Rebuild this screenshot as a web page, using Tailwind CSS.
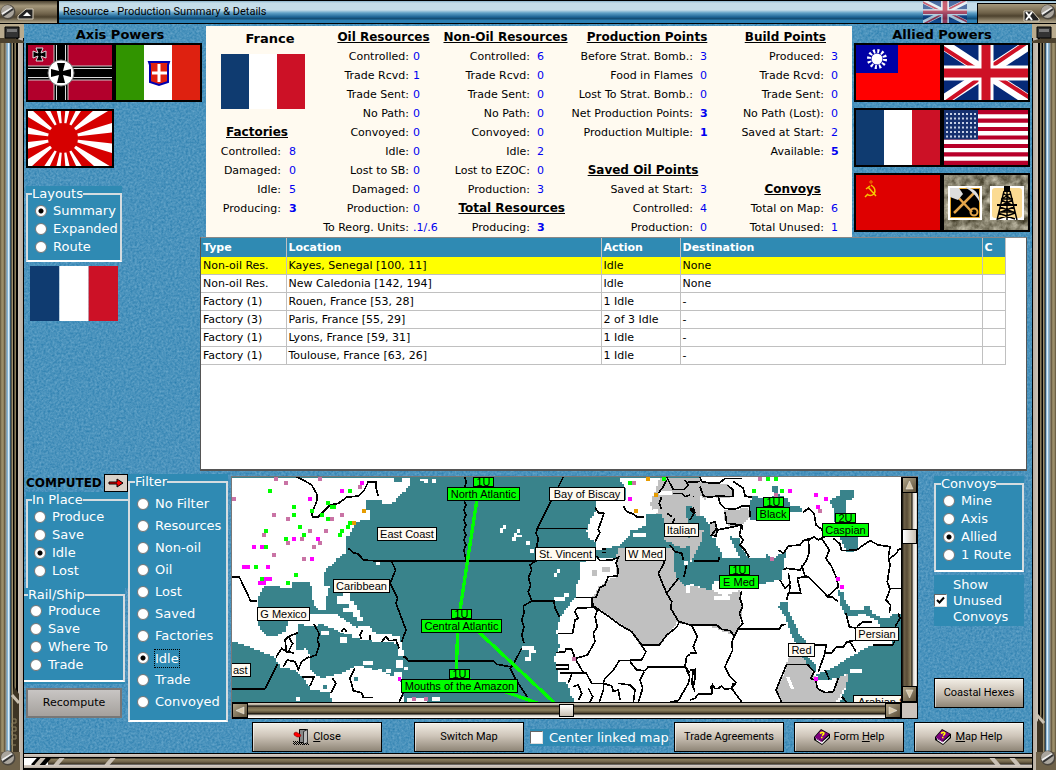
<!DOCTYPE html>
<html lang="en">
<head>
    <meta charset="UTF-8">
    <meta name="viewport" content="width=device-width, initial-scale=1.0">
    <title>Resource - Production Summary &amp; Details</title>
    <script src="https://cdn.jsdelivr.net/npm/@tailwindcss/browser@4"></script>
</head>
<body class="min-h-screen flex flex-col bg-[#4791bd] font-['DejaVu_Sans',Verdana,sans-serif] text-[11px] text-black [&_[type=radio]]:size-3 [&_[type=radio]]:shrink-0 [&_[type=radio]]:appearance-none [&_[type=radio]]:rounded-full [&_[type=radio]]:border [&_[type=radio]]:border-[#777] [&_[type=radio]]:bg-white [&_[type=radio]:checked]:bg-[radial-gradient(circle,#000_2px,#fff_3px)]">

    <!-- Shared flags and icons -->
    <svg class="hidden">
        <symbol id="france" viewBox="0 0 84 55" preserveAspectRatio="none">
            <path fill="#0f3b70" d="M0 0h28v55H0z"/><path fill="#fff" d="M28 0h28v55H28z"/><path fill="#cc1126" d="M56 0h28v55H56z"/>
        </symbol>
        <symbol id="uk" viewBox="0 0 84 55" preserveAspectRatio="none">
            <path fill="#062a78" d="M0 0h84v55H0z"/>
            <path stroke="#fff" stroke-width="11" d="M0 0l84 55M84 0L0 55"/>
            <path stroke="#ce1126" stroke-width="4" d="M-2 2l42 27M82-2L42 25M86 53L44 26M2 57l40-28"/>
            <path stroke="#fff" stroke-width="15" d="M42 0v55M0 28h84"/>
            <path stroke="#ce1126" stroke-width="9" d="M42 0v55M0 28h84"/>
        </symbol>
        <symbol id="book" viewBox="0 0 16 16">
            <path fill="#000" d="M7 0l9 5v4l-8 7-8-5V8z"/>
            <path fill="#800080" d="M7 1l8 4-7 7-7-4z"/>
            <path fill="#fff" d="M2 10l6 3 7-6v1l-7 7-6-4z"/>
            <path stroke="#c040c0" d="M1 8.500l7 4.500" fill="none"/>
            <path stroke="#ff0" stroke-width="1.500" fill="none" d="M6 4.500q2-2 4-.5 0 1.500-2 2.500M7 8.500h1.500"/>
        </symbol>
        <symbol id="screw" viewBox="0 0 16 16">
            <circle cx="8" cy="8" r="7.500" fill="#4b463e"/><circle cx="7.500" cy="7.500" r="6.500" fill="#aaa59d"/>
            <path stroke="#eee" stroke-width="2" d="M2 10l10-6"/><path stroke="#333" stroke-width="2" d="M3 12l10-7"/>
        </symbol>
    </svg>

    <!-- Title bar -->
    <header class="relative z-10 flex h-6 shrink-0 items-stretch border-y border-black bg-[linear-gradient(#8bb4cc,#c5dde9_2px,#c5dde9_9px,#5fa0c6_12px,#1c6394_16px,#12476c_18px,#2a7fb4_19px,#2a7fb4)]">
        <div class="flex w-[59px] items-center border-r-2 border-black bg-[linear-gradient(#4b4231,#a4977b_5px,#6e6149_13px,#4d422e_16px,#b7ab90)]">
            <svg class="size-4"><use href="#screw"/></svg>
            <button aria-label="Roll up" class="mt-1 ml-px">
                <svg class="block h-3 w-[17px]" viewBox="0 0 17 12"><path fill="#222" stroke="#d9d0bd" d="M1 11V8l8-7h7v10z"/><path fill="#fff" d="M6 8l4-4 4 4z"/></svg>
            </button>
        </div>
        <h1 class="flex-1 pl-1 pt-[2px] font-[Roboto,'Liberation_Sans',sans-serif] text-[11px] leading-[18px]">Resource - Production Summary &amp; Details</h1>
        <svg class="mr-[10px] h-[22px] w-11 opacity-60"><use href="#uk"/></svg>
        <div class="mt-[2px] flex w-[79px] items-center justify-end border-l border-t border-black bg-[linear-gradient(#a4977b,#6e6149_9px,#4d422e_12px,#b7ab90)]">
            <button aria-label="Close window" class="mt-1">
                <svg class="block h-3 w-[17px]" viewBox="0 0 17 12"><path fill="#222" stroke="#d9d0bd" d="M1 11V1h8l7 8v2z"/><path stroke="#fff" stroke-width="2" d="M3 2l6 8M9 2l-6 8"/></svg>
            </button>
            <svg class="size-4 self-start"><use href="#screw"/></svg>
        </div>
    </header>

    <div class="flex flex-1 items-stretch">
        <!-- Left frame -->
        <div class="relative w-6 shrink-0 bg-[linear-gradient(90deg,#5d5138_0,#a1946f_2px,#8a7c5c_4px,#4b412d_5px,#c8c0b0_6px,#3f7fae_7px,#cfe6f5_8px,#e8f4fc_9px,#4d8cb8_10px,#111_11px,#a69a78_12px,#8f8260_13px,#000_13px,#000_14px,#a1946f_15px,#77694b_16px,#000_16px,#000_18px,#cdc4b8_18px,#b8aea2_23px,#000_23px)]">
            <svg class="absolute left-0 top-0 h-6 w-6" viewBox="0 0 24 24"><path fill="#b9ab8e" d="M0 0h24v14H0z"/><path fill="#4d422e" d="M0 14h14l10 3v2H0z"/><path fill="#333" stroke="#000" d="M5 3h14v11H5z"/><path fill="#777" d="M7 5h10v3H7z"/></svg>
            <svg class="absolute bottom-0 left-0 h-[92px] w-6" viewBox="0 0 24 92"><path fill="#3d3424" d="M14 8l5 8v60h-6V14z"/><path stroke="#c9c0b0" stroke-width="3" d="M12 17l7 8"/><path fill="none" stroke="#8f8260" d="M12 41h4v4h-4v4h4v4h-4v4h4v4h-4v6h4"/><path fill="#6e6149" d="M0 74h20v18H0z"/></svg>
            <svg class="absolute bottom-1 left-0 size-4"><use href="#screw"/></svg>
        </div>

        <div class="relative isolate flex min-w-0 flex-1 flex-col">
            <!-- Speckled water background -->
            <svg class="absolute inset-0 -z-10 h-full w-full">
                <filter id="speckle" color-interpolation-filters="sRGB" x="0" y="0" width="100%" height="100%">
                    <feTurbulence type="fractalNoise" baseFrequency="0.45" numOctaves="2"/>
                    <feColorMatrix values=".3 0 0 0 .14 .2 0 0 0 .475 .14 0 0 0 .67 0 0 0 0 1"/>
                </filter>
                <rect width="100%" height="100%" filter="url(#speckle)"/>
            </svg>

            <!-- Powers, statistics and resource list -->
            <section class="flex min-h-[400px] flex-1 pt-[2px]">
                <aside class="w-44 shrink-0 pl-[2px]">
                    <h2 class="h-[17px] w-[188px] text-center text-[13px] font-bold leading-[18px]">Axis Powers</h2>
                    <div class="flex w-[176px]">
                        <button aria-label="Germany" class="h-[59px] w-[88px] border-2 border-black">
                            <svg class="block h-full w-full" viewBox="0 0 84 55" preserveAspectRatio="none">
                                <path fill="#b2002c" d="M0 0h84v55H0z"/>
                                <path stroke="#ccc" stroke-width="15" d="M33 0v55M0 28h84"/><path stroke="#000" stroke-width="13" d="M33 0v55M0 28h84"/>
                                <path stroke="#ddd" stroke-width="10" d="M33 0v55M0 28h84"/><path stroke="#000" stroke-width="8" d="M33 0v55M0 28h84"/>
                                <circle cx="33" cy="28" r="13" fill="#fff" stroke="#777"/>
                                <path fill="#000" d="M29 18h8l-2 8 8-2v8l-8-2 2 8h-8l2-8-8 2v-8l8 2z"/>
                                <path fill="#000" stroke="#ddd" d="M8 3h7l-2 5 5-2v7l-5-2 2 5H8l2-5-5 2V6l5 2z"/>
                            </svg>
                        </button>
                        <button aria-label="Italy" class="h-[59px] w-[88px] border-2 border-black">
                            <svg class="block h-full w-full" viewBox="0 0 84 55" preserveAspectRatio="none">
                                <path fill="#319400" d="M0 0h28v55H0z"/><path fill="#fff" d="M28 0h28v55H28z"/><path fill="#de2110" d="M56 0h28v55H56z"/>
                                <path fill="#de2110" stroke="#0000b0" stroke-width="2" d="M33 17h20l-1 3v17l-9 3-9-3V20z"/><path stroke="#fff" stroke-width="3" d="M43 19v18M36 28h15"/>
                            </svg>
                        </button>
                    </div>
                    <button aria-label="Japan" class="mt-[7px] block h-[59px] w-[88px] border-2 border-black">
                        <svg class="block h-full w-full" viewBox="0 0 84 55" preserveAspectRatio="none">
                            <path fill="#fff" d="M0 0h84v55H0z"/>
                            <g fill="#d60000" transform="translate(35 27)">
                                <path d="M0 0L-5-60H5zM0 0L-5 60H5zM0 0L-70-8V8zM0 0L70-8V8z"/>
                                <path d="M0 0L14-60 28-60zM0 0L40-60 62-56zM0 0L70-42 78-24zM0 0L-14-60-28-60zM0 0L-40-60-62-56zM0 0L-70-42-78-24z"/>
                                <path d="M0 0L14 60 28 60zM0 0L40 60 62 56zM0 0L70 42 78 24zM0 0L-14 60-28 60zM0 0L-40 60-62 56zM0 0L-70 42-78 24z"/>
                                <circle r="15"/>
                            </g>
                        </svg>
                    </button>

                    <div class="mt-[18px] h-[76px] w-24 bg-[#2f8ab3]">
                        <fieldset class="h-[76px] border-2 border-[#d5dce0] border-b-white pl-[7px] text-[13px] leading-[18px] text-white">
                            <legend class="-ml-[3px] h-4 leading-4">Layouts</legend>
                            <label class="flex items-center gap-[6px]"><input type="radio" name="layout" checked>Summary</label>
                            <label class="flex items-center gap-[6px]"><input type="radio" name="layout">Expanded</label>
                            <label class="flex items-center gap-[6px]"><input type="radio" name="layout">Route</label>
                        </fieldset>
                    </div>
                    <svg class="ml-1 mt-1 block h-[55px] w-[88px]"><use href="#france"/></svg>
                </aside>

                <div class="flex min-w-0 flex-1 flex-col">
                    <div class="flex">
                        <!-- Statistics -->
                        <div class="ml-[6px] flex h-[211px] flex-1 justify-between bg-[#fffaf0] pt-[2px] leading-[19px]">
                            <div class="w-[111px]">
                                <h2 class="w-32 text-center text-[13px] font-bold leading-[22px]">France</h2>
                                <svg class="ml-[15px] mt-1 block h-[55px] w-[84px]"><use href="#france"/></svg>
                                <h3 class="mt-[14px] w-[102px] text-center text-xs font-bold leading-[19px] underline">Factories</h3>
                                <dl class="grid grid-cols-[75px_1fr] gap-x-2 *:odd:text-right *:even:text-[#0000f0]">
                                    <dt>Controlled:</dt><dd>8</dd>
                                    <dt>Damaged:</dt><dd>0</dd>
                                    <dt>Idle:</dt><dd>5</dd>
                                    <dt>Producing:</dt><dd class="font-bold">3</dd>
                                </dl>
                            </div>
                            <div class="w-[129px]">
                                <h3 class="pl-1 text-center text-xs font-bold leading-[19px] underline">Oil Resources</h3>
                                <dl class="grid grid-cols-[92px_1fr] gap-x-1 whitespace-nowrap *:odd:text-right *:even:text-[#0000f0]">
                                    <dt>Controlled:</dt><dd>0</dd>
                                    <dt>Trade Rcvd:</dt><dd>1</dd>
                                    <dt>Trade Sent:</dt><dd>0</dd>
                                    <dt>No Path:</dt><dd>0</dd>
                                    <dt>Convoyed:</dt><dd>0</dd>
                                    <dt>Idle:</dt><dd>0</dd>
                                    <dt>Lost to SB:</dt><dd>0</dd>
                                    <dt>Damaged:</dt><dd>0</dd>
                                    <dt>Production:</dt><dd>0</dd>
                                    <dt>To Reorg. Units:</dt><dd>.1/.6</dd>
                                </dl>
                            </div>
                            <div class="w-[119px]">
                                <h3 class="flex justify-center whitespace-nowrap text-xs font-bold leading-[19px] underline">Non-Oil Resources</h3>
                                <dl class="grid grid-cols-[84px_1fr] gap-x-[7px] whitespace-nowrap *:odd:text-right *:even:text-[#0000f0]">
                                    <dt>Controlled:</dt><dd>6</dd>
                                    <dt>Trade Rcvd:</dt><dd>0</dd>
                                    <dt>Trade Sent:</dt><dd>0</dd>
                                    <dt>No Path:</dt><dd>0</dd>
                                    <dt>Convoyed:</dt><dd>0</dd>
                                    <dt>Idle:</dt><dd>2</dd>
                                    <dt>Lost to EZOC:</dt><dd>0</dd>
                                    <dt>Production:</dt><dd>3</dd>
                                </dl>
                                <h3 class="text-right text-xs font-bold leading-[19px] underline">Total Resources</h3>
                                <dl class="grid grid-cols-[84px_1fr] gap-x-[7px] *:odd:text-right *:even:text-[#0000f0]">
                                    <dt>Producing:</dt><dd class="font-bold">3</dd>
                                </dl>
                            </div>
                            <div class="w-36">
                                <h3 class="pl-5 text-center text-xs font-bold leading-[19px] underline">Production Points</h3>
                                <dl class="grid grid-cols-[128px_1fr] gap-x-[7px] whitespace-nowrap *:odd:text-right *:even:text-[#0000f0]">
                                    <dt>Before Strat. Bomb.:</dt><dd>3</dd>
                                    <dt>Food in Flames</dt><dd>0</dd>
                                    <dt>Lost To Strat. Bomb.:</dt><dd>0</dd>
                                    <dt>Net Production Points:</dt><dd class="font-bold">3</dd>
                                    <dt>Production Multiple:</dt><dd class="font-bold">1</dd>
                                </dl>
                                <h3 class="mt-[19px] pl-3 text-center text-xs font-bold leading-[19px] underline">Saved Oil Points</h3>
                                <dl class="grid grid-cols-[128px_1fr] gap-x-[7px] *:odd:text-right *:even:text-[#0000f0]">
                                    <dt>Saved at Start:</dt><dd>3</dd>
                                    <dt>Controlled:</dt><dd>4</dd>
                                    <dt>Production:</dt><dd>0</dd>
                                </dl>
                            </div>
                            <div class="w-[143px]">
                                <h3 class="w-[117px] text-right text-xs font-bold leading-[19px] underline">Build Points</h3>
                                <dl class="grid grid-cols-[115px_1fr] gap-x-[7px] *:odd:text-right *:even:text-[#0000f0]">
                                    <dt>Produced:</dt><dd>3</dd>
                                    <dt>Trade Rcvd:</dt><dd>0</dd>
                                    <dt>Trade Sent:</dt><dd>0</dd>
                                    <dt>No Path (Lost):</dt><dd>0</dd>
                                    <dt>Saved at Start:</dt><dd>2</dd>
                                    <dt>Available:</dt><dd class="font-bold">5</dd>
                                </dl>
                                <h3 class="mt-[19px] w-28 text-right text-xs font-bold leading-[19px] underline">Convoys</h3>
                                <dl class="grid grid-cols-[115px_1fr] gap-x-[7px] *:odd:text-right *:even:text-[#0000f0]">
                                    <dt>Total on Map:</dt><dd>6</dd>
                                    <dt>Total Unused:</dt><dd>1</dd>
                                </dl>
                            </div>
                        </div>

                        <!-- Allied powers -->
                        <aside class="w-[180px] shrink-0 pl-[2px]">
                            <h2 class="h-[17px] w-[176px] text-center text-[13px] font-bold leading-[18px]">Allied Powers</h2>
                            <div class="grid w-[176px] grid-cols-2 gap-y-[6px]">
                                <button aria-label="China" class="h-[59px] border-2 border-black">
                                    <svg class="block h-full w-full" viewBox="0 0 84 55" preserveAspectRatio="none"><path fill="#f00" d="M0 0h84v55H0z"/><path fill="#0000a5" d="M0 0h42v28H0z"/><circle cx="21" cy="14" r="8" fill="none" stroke="#fff" stroke-width="4" stroke-dasharray="2 2.200"/><circle cx="21" cy="14" r="5.500" fill="#fff"/></svg>
                                </button>
                                <button aria-label="United Kingdom" class="h-[59px] border-2 border-black"><svg class="block h-full w-full"><use href="#uk"/></svg></button>
                                <button aria-label="France" class="h-[59px] border-2 border-black"><svg class="block h-full w-full"><use href="#france"/></svg></button>
                                <button aria-label="United States" class="h-[59px] border-2 border-black">
                                    <svg class="block h-full w-full" viewBox="0 0 84 55" preserveAspectRatio="none"><path fill="#fff" d="M0 0h84v55H0z"/><path stroke="#b8002a" stroke-width="4.230" d="M0 2.100h84M0 10.600h84M0 19h84M0 27.500h84M0 36h84M0 44.400h84M0 52.900h84"/><path fill="#16306f" d="M0 0h34v29.600H0z"/><path stroke="#c5cfe6" stroke-width="2" stroke-dasharray="2 2" d="M2 4h31M2 8.500h31M2 13h31M2 17.500h31M2 22h31M2 26.500h31"/></svg>
                                </button>
                                <button aria-label="USSR" class="h-[59px] border-2 border-black">
                                    <svg class="block h-full w-full" viewBox="0 0 84 55" preserveAspectRatio="none"><path fill="#de0000" d="M0 0h84v55H0z"/><g fill="none" stroke="#f7c500" stroke-width="1.500"><path d="M10 14l4-3M12 12l8 9M15 10q6 4 3 9-4 3-7 0M9 22l3-3"/><path stroke="#f07000" stroke-width="1" d="M15 5v4M13 7h4"/></g></svg>
                                </button>
                                <button aria-label="Resources and oil" class="h-[59px] border-2 border-black">
                                    <svg class="block h-full w-full" viewBox="0 0 84 55" preserveAspectRatio="none">
                                        <filter id="rock" color-interpolation-filters="sRGB" x="0" y="0" width="100%" height="100%"><feTurbulence type="fractalNoise" baseFrequency="0.12" numOctaves="4"/><feColorMatrix values=".8 0 0 0 .12 .8 0 0 0 .1 .8 0 0 0 .02 0 0 0 0 1"/></filter>
                                        <rect width="84" height="55" filter="url(#rock)"/>
                                        <path fill="#fff" d="M4 11h34v34H4z"/><path fill="#000" stroke="#e5a52c" d="M6.500 13.500h29v29h-29z"/>
                                        <path stroke="#e5a54a" stroke-width="2.500" d="M12 20l16 17M31 17L10 38"/><circle cx="30" cy="37" r="3.500" fill="none" stroke="#e5a54a" stroke-width="2"/>
                                        <path fill="#ddd" d="M6 13h9l4 6-5 6-8-3z"/><path fill="#ddd" d="M21 12q14 1 15 16-4-9-15-16z"/>
                                        <path fill="#fff" d="M46 11h34v34H46z"/><rect x="48" y="13" width="30" height="30" rx="3" fill="#fbdb92"/>
                                        <path fill="#000" d="M60 11h6v6h-6zM53 29h20v2H53z"/><path fill="none" stroke="#000" stroke-width="1.400" d="M60 16l-7 29M66 16l7 29M63 16v29M59 18l8 6M67 18l-9 6M57 24h12M57 25l11 5M69 25l-11 5M56 32l13 5M70 32l-13 5M55 37h16M54 38l17 6M71 38l-17 6"/>
                                    </svg>
                                </button>
                            </div>
                        </aside>
                    </div>

                    <!-- Resource list -->
                    <div class="mr-[5px] flex-1 border border-b-2 border-[#555] border-t-[#888] bg-white">
                        <table class="w-[805px] table-fixed border-collapse text-left">
                            <thead>
                                <tr class="h-[19px] bg-[#2f8ab3] leading-[18px] text-white *:border-r *:border-[#c0c0c0] *:pl-[2px] *:font-bold">
                                    <th class="w-[85px]">Type</th><th class="w-[315px]">Location</th><th class="w-[79px]">Action</th><th class="w-[302px]">Destination</th><th>C</th>
                                </tr>
                            </thead>
                            <tbody class="leading-[17px] *:*:border-b *:*:border-r *:*:border-[#c0c0c0] *:*:pl-[2px]">
                                <tr class="bg-[#ff0]"><td>Non-oil Res.</td><td>Kayes, Senegal [100, 11]</td><td>Idle</td><td>None</td><td></td></tr>
                                <tr><td>Non-oil Res.</td><td>New Caledonia [142, 194]</td><td>Idle</td><td>None</td><td></td></tr>
                                <tr><td>Factory (1)</td><td>Rouen, France [53, 28]</td><td>1 Idle</td><td>-</td><td></td></tr>
                                <tr><td>Factory (3)</td><td>Paris, France [55, 29]</td><td>2 of 3 Idle</td><td>-</td><td></td></tr>
                                <tr><td>Factory (1)</td><td>Lyons, France [59, 31]</td><td>1 Idle</td><td>-</td><td></td></tr>
                                <tr><td>Factory (1)</td><td>Toulouse, France [63, 26]</td><td>1 Idle</td><td>-</td><td></td></tr>
                            </tbody>
                        </table>
                    </div>
                </div>
            </section>

            <!-- Filters, map and convoys -->
            <section class="mt-[3px] flex h-[248px] shrink-0">
                <div class="w-26 shrink-0">
                    <div class="flex h-[18px] items-center justify-between">
                        <span class="pl-[2px] text-xs font-bold">COMPUTED</span>
                        <button aria-label="Computed" class="h-[18px] w-6 border border-black bg-[#d8d0c8]">
                            <svg class="mx-auto block h-3 w-[17px]" viewBox="0 0 17 12"><path fill="#f00" stroke="#000" d="M1 5h8V2l6 4-6 4V7H1z"/></svg>
                        </button>
                    </div>
                    <div class="ml-[2px] h-24 bg-[#2f8ab3]">
                        <fieldset class="h-24 border-2 border-b-0 border-r-0 border-[#d5dce0] pl-[6px] text-[13px] leading-[18px] text-white">
                            <legend class="-ml-[2px] h-4 leading-4">In Place</legend>
                            <label class="flex items-center gap-[6px]"><input type="radio" name="place">Produce</label>
                            <label class="flex items-center gap-[6px]"><input type="radio" name="place">Save</label>
                            <label class="flex items-center gap-[6px]"><input type="radio" name="place" checked>Idle</label>
                            <label class="flex items-center gap-[6px]"><input type="radio" name="place">Lost</label>
                        </fieldset>
                    </div>
                    <div class="h-24 w-[101px] bg-[#2f8ab3]">
                        <fieldset class="h-[94px] border-2 border-l-0 border-[#d5dce0] border-b-white pl-[6px] text-[13px] leading-[18px] text-white">
                            <legend class="-ml-[2px] h-[14px] leading-[14px]">Rail/Ship</legend>
                            <label class="flex items-center gap-[6px]"><input type="radio" name="rail">Produce</label>
                            <label class="flex items-center gap-[6px]"><input type="radio" name="rail">Save</label>
                            <label class="flex items-center gap-[6px]"><input type="radio" name="rail">Where To</label>
                            <label class="flex items-center gap-[6px]"><input type="radio" name="rail">Trade</label>
                        </fieldset>
                    </div>
                    <button class="ml-[2px] mt-1 h-[30px] w-24 border-2 border-[#777] bg-[linear-gradient(#c8c5c3,#a5a19d)]">Recompute</button>
                </div>

                <div class="w-[100px] shrink-0 bg-[#2f8ab3]">
                    <fieldset class="h-[248px] border-2 border-[#d5dce0] border-b-white pl-[7px] text-[13px] text-white">
                        <legend class="-ml-[2px] h-4 leading-4">Filter</legend>
                        <div class="pt-[3px] *:flex *:h-[22px] *:items-center *:gap-[6px]">
                            <label><input type="radio" name="filter">No Filter</label>
                            <label><input type="radio" name="filter">Resources</label>
                            <label><input type="radio" name="filter">Non-oil</label>
                            <label><input type="radio" name="filter">Oil</label>
                            <label><input type="radio" name="filter">Lost</label>
                            <label><input type="radio" name="filter">Saved</label>
                            <label><input type="radio" name="filter">Factories</label>
                            <label><input type="radio" name="filter" checked><span class="leading-[17px] outline-1 outline-dotted outline-black">Idle</span></label>
                            <label><input type="radio" name="filter">Trade</label>
                            <label><input type="radio" name="filter">Convoyed</label>
                        </div>
                    </fieldset>
                </div>

                <!-- Map -->
                <div class="ml-[3px] mt-[2px] grid h-[243px] min-w-0 flex-1 grid-cols-[1fr_17px] grid-rows-[1fr_17px] border-l border-t border-[#777]">
                    <div class="relative overflow-hidden bg-[#39838b] font-['Liberation_Sans',Arial,sans-serif] text-[11px] leading-3">
                        <!-- 3 map units to the pixel -->
                        <svg class="absolute left-0 top-0 h-[225px] w-[2010px]" viewBox="6 21 6030 675" preserveAspectRatio="xMinYMin" shape-rendering="crispEdges">
                            <!-- Americas -->
                            <g fill="#fff">
                                <polygon points="6,21 490,21 490,33 515,33 515,21 540,21 540,45 530,62 510,75 500,90 480,102 455,102 455,92 410,92 410,122 422,122 422,150 380,155 365,185 350,205 350,245 325,265 300,290 285,305 280,345 300,350 290,385 290,418 265,420 250,400 245,345 238,334 185,336 185,355 150,355 150,345 105,345 95,365 85,385 82,450 90,480 105,498 138,498 165,480 175,450 240,430 320,432 350,455 385,478 385,490 345,490 270,460 262,470 245,470 205,460 195,540 225,535 240,560 240,600 270,625 330,610 370,590 395,590 430,600 500,620 515,640 520,696 305,696 300,665 245,660 215,615 195,600 150,590 138,562 110,550 50,525 6,514"/>
                                <polygon points="385,468 420,470 425,488 470,492 505,500 518,530 520,560 505,560 505,520 455,515 400,510 365,500"/>
                                <path d="M320 378h20v-8h20v24h12v12h10v14h8v20h10v12h-20v-10h-12v-16h-30v-12h20v-12h-38zM272 482h26v12h-26zM330 502h22v18h-22zM330 482h26v8h-26zM438 272h12v12h-12zM570 26h24v12h-12v-6h-12zM606 26h12v12h-12zM398 573h32v12h-32zM444 596h12v12h-12zM468 598h16v12h-16zM498 570h20v24h-20zM492 606h24v20h-24zM523 590h10v10h-10zM198 682h12v12h-12zM606 682h24v12h-24zM530 684h60v12h-60z"/>
                            </g>
                            <path fill="#39838b" d="M372 620h12v12h-12zM260 570h14v14h-14zM206 470h14v26h-14zM280 644h12v12h-12z"/>
                            <g fill="none" stroke="#000" stroke-width="5">
                                <path d="M6 321H28L62 393H82M200 21L220 30 245 45 262 75 260 95 245 130 248 140H265L300 105 325 100 350 82 385 78 402 62 415 35H437V50L445 78M355 235L370 248 385 252 400 270 430 272H920M485 275L497 300 480 340 503 385 498 400 528 480 515 515M6 656H105L142 583M252 462L268 492 262 510 268 525 258 555 240 562"/>
                                <path d="M704 21L709 38 702 55 708 72 702 90 708 105 702 120 708 135 702 150 708 165 702 180 708 195 702 210 708 225 702 240 708 272M518 560H525L535 572H790L800 583 840 590M138 562L155 535 170 545 165 510 175 500 205 488M175 500L188 520 175 545 192 550M160 590L172 570 195 575 205 598 215 575 238 560M217 621H252L240 648M308 625L318 640 302 670M375 595L360 625 370 662 395 668 400 682H428M335 485L342 475 350 485M398 480L390 495 395 508M455 515L468 500 478 512 498 510 508 535M508 696L520 668M420 495V510"/>
                            </g>
                            <path stroke="#0f0" stroke-width="12" d="M114 63h12M186 111h12M186 135h12M203 171h12M101 183h12M161 207h12M101 231h12M72 291h12M192 315h12M89 327h12M167 339h12M288 99h12M299 111h18M270 135h12M288 147h12M354 63h12M240 123h12M353 159h12M347 171h12M330 183h12M324 195h12M216 195h12"/>
                            <path stroke="#f0f" stroke-width="12" d="M66 231h12M90 231h12M36 291h24M108 291h12M101 327h24M84 339h24M186 207h12M257 207h12M240 267h12M234 87h12M330 63h12M390 39h12M504 626h10"/>
                            <path stroke="#c973a5" stroke-width="12" d="M6 87h12M132 27h12M162 39h12M264 27h12M384 51h12M126 135h12M168 147h12M300 147h12M330 135h12M96 195h12M234 183h12M282 183h12M209 207h12M168 219h12M263 219h12M246 231h12M126 255h12M216 267h12M545 687h12M581 687h12"/>
                            <path stroke="#e79c00" stroke-width="12" d="M396 123h12M365 159h12"/>

                            <!-- Western Europe and Africa -->
                            <g transform="translate(690 0)">
                                <g fill="#fff">
                                    <polygon points="475,21 730,21 730,120 640,130 600,125 575,135 555,140 555,165 525,180 510,180 510,200 480,225 440,237 405,237 405,215 385,200 380,180 395,140 405,120 405,92 500,92 497,55"/>
                                    <polygon points="410,262 475,262 480,270 640,300 730,360 730,696 345,696 330,670 325,640 295,632 295,600 280,565 298,530 290,480 300,440 345,380 345,350 360,320 360,278"/>
                                    <path d="M120 175h10v-10h8v12h-8v12h-10zM156 200h6v-12h18v-12h-8v18h14v8h-18v10h-12zM198 214h12v10h-12zM210 237h12v12h-12zM282 308h8v-10h10v12h-8v10h-10zM282 382h30v-12h14v12h-10v12h-34zM186 528h36v12h6v10h-16v22h-18v-12h14v-20h-22z"/>
                                </g>
                                <g fill="#c0c0c0">
                                    <polygon points="600,21 730,21 730,220 700,240 680,260 655,240 640,220 610,210 612,160 600,135 580,120 570,100"/>
                                    <polygon points="465,265 475,235 640,235 640,280 655,320 690,345 730,355 730,465 655,458 605,522 545,525 520,490 400,405 395,385 415,350 440,330 472,318"/>
                                    <path d="M395 300h15v18h-15zM425 290h25v15h-25z"/>
                                </g>
                                <polygon fill="#39838b" points="555,130 605,130 612,160 612,232 480,232 480,228 512,205 560,170"/>
                                <polygon fill="#39838b" points="675,105 690,105 705,140 730,150 730,350 680,345 650,320 640,290 645,225 670,235 690,225 680,130"/>
                                <path fill="#fff" d="M598 64h38v12h-38zM672 272h12v12h-12zM678 346h30v12h20v10h-50zM580 116h14v12h-14zM520 190h38v10h-38z"/>
                                <g fill="none" stroke="#000" stroke-width="5">
                                    <path d="M310 21L290 60 232 175H382M232 175L228 190 235 205 228 240 230 270 210 285 215 300 205 322 212 345 205 365 215 393H282L285 415 298 440M215 393L190 408 192 430 185 450 192 470 186 495 192 520M185 535L160 583 150 595 165 625 203 682"/>
                                    <path d="M405 112L415 128 432 130 415 178 420 188 405 215M490 108L500 125 520 132 530 140H552M410 258L420 272 455 270 475 262 468 280 475 300 472 318 445 320 435 345 420 352 408 382H348M395 382V408L412 420 405 440 412 470 400 490 405 515 382 555 348 565M395 385L400 408 440 435 480 465 515 485 545 525H598L620 495 650 472 658 455 690 465H740M295 490H338L345 450 355 445 345 425 350 415 395 412M288 548L315 545 318 537H335L345 565 370 608M288 585H325V597H288M300 608H378L395 640 430 640 435 625 460 600 478 572 545 570 558 545 545 528M510 575L530 600 555 602 565 590H675L680 560 710 540 712 505 695 470M552 605L540 630 548 655 535 696M675 590L700 620 698 645 710 670 705 696M430 640V660L418 696M430 640L455 648 460 665 475 660 480 690M475 640L510 645 525 660 520 696M340 650L355 645 365 670 355 690M385 655L398 680 390 696M630 696L655 692 685 640 690 620 680 600M325 640L335 612"/>
                                    <path d="M595 310L620 370 655 325M610 260L612 280 595 310M620 370L635 395 632 415 658 458M620 30L610 50 595 70M620 21L630 40 640 58H672L685 45 675 30M605 80L598 100 605 118M622 130L635 140M645 145L635 165M640 70L665 70 675 80 690 75M630 225L645 245 665 250 670 270M680 285L672 320M425 237H438M425 247H438M720 35H685M690 65L700 78 720 70M690 120L700 115 705 130"/>
                                </g>
                                <path stroke="#0f0" stroke-width="12" d="M504 39h12M606 27h12"/><path stroke="#f0f" stroke-width="12" d="M503 87h12"/><path stroke="#c973a5" stroke-width="12" d="M515 39h12M336 567h12"/><path stroke="#e79c00" stroke-width="12" d="M558 27h12M582 75h12M522 123h12"/>
                            </g>

                            <!-- Middle East -->
                            <g transform="translate(1380 0)">
                                <path fill="#fff" d="M30 21h606v675H0V200h30z"/>
                                <g fill="#c0c0c0">
                                    <polygon points="0,50 30,35 65,40 115,45 130,75 115,85 70,80 45,90 30,75 0,75"/>
                                    <polygon points="102,120 135,120 175,110 180,145 155,165 115,165 102,145"/>
                                    <polygon points="0,345 65,362 100,380 150,360 155,430 150,470 135,500 75,472 0,465"/>
                                    <polygon points="60,155 80,155 80,195 60,200"/>
                                    <polygon points="0,185 45,175 30,230 10,270 0,275"/>
                                    <polygon points="300,558 345,562 360,590 375,625 380,655 405,668 430,665 440,625 475,612 470,650 440,696 275,696 258,662 290,590 288,575"/>
                                </g>
                                <g fill="#39838b">
                                    <polygon points="0,140 35,140 60,165 60,200 75,205 78,230 92,240 95,262 190,262 225,262 225,250 245,265 285,240 285,265 275,328 205,345 160,345 120,355 120,333 70,335 65,362 0,340 0,275 30,225 40,180 0,170"/>
                                    <polygon points="118,200 150,205 150,230 175,265 150,262"/>
                                    <polygon points="180,95 190,75 215,85 250,80 248,50 262,50 268,75 295,88 300,105 330,110 335,128 300,125 300,150 178,150"/>
                                    <polygon points="452,58 490,58 490,85 465,95 470,130 500,160 505,242 470,245 455,210 440,180 432,140 432,112 420,95 425,82 450,80"/>
                                    <polygon points="270,395 295,395 295,425 320,475 330,500 350,520 350,560 375,590 380,610 350,575 330,550 305,490 285,440 265,410"/>
                                    <polygon points="445,360 460,370 465,395 480,410 482,420 518,420 525,405 540,410 545,430 570,442 600,442 605,430 636,430 636,696 450,696 465,655 475,612 420,630 385,630 380,610 405,605 430,590 480,560 540,525 605,525 605,480 570,470 565,450 530,432 480,438 465,430 450,395"/>
                                </g>
                                <path fill="#fff" d="M480 597h36v12h-36zM288 620h10l14 36h-10z"/>
                                <path fill="#fff" d="M72 333h48v18h-24v12h-24zM72 378h48v12h-48z"/>
                                <g fill="none" stroke="#000" stroke-width="5">
                                    <path d="M30 21L35 35 65 40 90 38 105 25H155M30 50L40 78 60 82 80 78 128 80 130 60 112 45M130 35L160 55 165 78 185 82M85 80L90 100 105 115 135 118 155 108 178 108 180 140M105 125L110 160 155 165 158 180M60 160L75 155 80 175 65 195 78 198 82 180 155 165M0 115L12 130 0 150M12 272H85L88 262M155 165L148 195 160 210 150 225 165 240 178 262"/>
                                    <path d="M338 128L355 115 372 130 378 165 395 178 405 200 385 210 372 200 355 212 358 245 350 270 340 285 330 300 290 295 280 300M265 240L280 250 295 228 330 225 340 212 362 205M395 205L418 240 408 265 425 290 440 325 445 350M445 350L412 380 400 365 355 320 345 320 335 285M295 310L300 340 285 355 270 330M300 345L298 368H332L322 325 352 318M290 390L295 368M410 380L425 380 445 395M430 205L450 222 455 242 500 240 520 225 540 212 565 225 600 230 595 260 600 285 592 335 600 358 588 390 602 405 598 430M600 355H636M600 265L620 250 625 238H636M625 240L632 235"/>
                                    <path d="M155 362L150 385 158 410 148 430 158 460 145 475 130 505 125 520 128 540 105 590 120 620 138 638 125 655 155 696M145 477H268L275 465 288 463M0 465H80L95 478 120 482 135 500M5 465L22 500 10 530 18 548H0M0 600L15 598V625L10 650M0 690L15 685 25 672H65L68 645 75 655H85L95 648 105 658 125 655 130 640M10 600L5 640 15 665M290 583H352L372 605 362 625 378 632 382 655 405 668 430 665 445 625M290 583L258 660 275 696M345 525H408L405 550 385 605M408 550L425 548 440 530 460 532 470 515H480L498 545M470 515L500 510M405 600L418 628M468 430L478 470 500 475M548 525H608L615 512M625 430L630 445 615 470M500 470L520 455H545M455 680L470 696M60 655L68 645"/>
                                </g>
                                <path stroke="#0f0" stroke-width="12" d="M228 27h12M252 27h12M186 63h12M270 63h12"/>
                                <path stroke="#f0f" stroke-width="12" d="M294 63h12M372 75h12M402 87h12M378 111h12M438 327h12M450 351h12M372 626h12"/>
                                <path stroke="#c973a5" stroke-width="12" d="M204 27h12M252 75h12M384 123h12M240 267h12"/>
                            </g>

                            <!-- Convoy routes -->
                            <path fill="none" stroke="#0f0" stroke-width="10" d="M742 80L690 420M683 480L679 600M745 485L975 700M700 610L720 630M825 665L925 700"/>
                        </svg>

                        <span class="absolute left-[241px] top-0 h-[10px] w-[21px] overflow-hidden border border-black bg-[#0f0] text-center leading-[9px]">1U</span>
                        <span class="absolute left-[215px] top-[10px] h-[14px] w-[73px] whitespace-nowrap border border-black bg-[#0f0] text-center">North Atlantic</span>
                        <span class="absolute left-[219px] top-[132px] h-[10px] w-[21px] overflow-hidden border border-black bg-[#0f0] text-center leading-[9px]">1U</span>
                        <span class="absolute left-[189px] top-[142px] h-[14px] w-[81px] whitespace-nowrap border border-black bg-[#0f0] text-center">Central Atlantic</span>
                        <span class="absolute left-[217px] top-[192px] h-[10px] w-[21px] overflow-hidden border border-black bg-[#0f0] text-center leading-[9px]">1U</span>
                        <span class="absolute left-[169px] top-[202px] h-[14px] w-[117px] whitespace-nowrap border border-black bg-[#0f0] text-center">Mouths of the Amazon</span>
                        <span class="absolute left-[531px] top-5 h-[10px] w-[21px] overflow-hidden border border-black bg-[#0f0] text-center leading-[9px]">1U</span>
                        <span class="absolute left-[524px] top-[30px] h-[14px] w-[34px] whitespace-nowrap border border-black bg-[#0f0] text-center">Black</span>
                        <span class="absolute left-[603px] top-9 h-[10px] w-[21px] overflow-hidden border border-black bg-[#0f0] text-center leading-[9px]">2U</span>
                        <span class="absolute left-[590px] top-[46px] h-[14px] w-[47px] whitespace-nowrap border border-black bg-[#0f0] text-center">Caspian</span>
                        <span class="absolute left-[497px] top-[88px] h-[10px] w-[21px] overflow-hidden border border-black bg-[#0f0] text-center leading-[9px]">1U</span>
                        <span class="absolute left-[487px] top-[98px] h-[14px] w-10 whitespace-nowrap border border-black bg-[#0f0] text-center">E Med</span>

                        <span class="absolute left-[145px] top-[50px] h-[14px] w-[60px] whitespace-nowrap border border-black bg-[#fffaf0] text-center">East Coast</span>
                        <span class="absolute left-[101px] top-[102px] h-[14px] w-[57px] whitespace-nowrap border border-black bg-[#fffaf0] text-center">Caribbean</span>
                        <span class="absolute left-[25px] top-[130px] h-[14px] w-[53px] whitespace-nowrap border border-black bg-[#fffaf0] text-center">G Mexico</span>
                        <span class="absolute left-0 top-[186px] h-[14px] w-[19px] border border-l-0 border-black bg-[#fffaf0] pl-px">ast</span>
                        <span class="absolute left-[317px] top-[10px] h-[14px] w-[76px] whitespace-nowrap border border-black bg-[#fffaf0] text-center">Bay of Biscay</span>
                        <span class="absolute left-[303px] top-[70px] h-[14px] w-[61px] whitespace-nowrap border border-black bg-[#fffaf0] text-center">St. Vincent</span>
                        <span class="absolute left-[393px] top-[70px] h-[14px] w-[41px] whitespace-nowrap border border-black bg-[#fffaf0] text-center">W Med</span>
                        <span class="absolute left-[432px] top-[46px] h-[14px] w-[35px] whitespace-nowrap border border-black bg-[#fffaf0] text-center">Italian</span>
                        <span class="absolute left-[623px] top-[150px] h-[14px] w-11 whitespace-nowrap border border-black bg-[#fffaf0] text-center">Persian</span>
                        <span class="absolute left-[556px] top-[166px] h-[14px] w-[27px] whitespace-nowrap border border-black bg-[#fffaf0] text-center">Red</span>
                        <span class="absolute left-[621px] top-[218px] h-[14px] w-[70px] whitespace-nowrap border border-black bg-[#fffaf0] pl-1">Arabian S</span>
                    </div>
                    <!-- Vertical scroll bar -->
                    <div class="flex flex-col border-x border-black bg-[linear-gradient(90deg,#000,#6e6149_2px,#5a4d37_5px,#8f8260_9px,#000_10px,#d8cfc2_11px,#fff_14px,#b8ae9c)]">
                        <button aria-label="Scroll up" class="h-4 border border-black bg-[linear-gradient(135deg,#b0a488,#5a4d37)]"><svg class="mx-auto h-3 w-[9px]" viewBox="0 0 9 12"><path fill="#d8c8a8" stroke="#eee" stroke-width=".5" d="M4.500 2L8 10H1z"/></svg></button>
                        <div class="flex-1 pt-[36px]"><div class="h-[15px] border border-black bg-[linear-gradient(90deg,#fff,#c8beb0)]"></div></div>
                        <button aria-label="Scroll down" class="h-4 border border-black bg-[linear-gradient(135deg,#b0a488,#5a4d37)]"><svg class="mx-auto h-3 w-[9px]" viewBox="0 0 9 12"><path fill="#d8c8a8" stroke="#eee" stroke-width=".5" d="M4.500 10L8 2H1z"/></svg></button>
                    </div>
                    <!-- Horizontal scroll bar -->
                    <div class="flex border-y border-black bg-[linear-gradient(#d8cfc2,#b8ae9c_2px,#000_3px,#6e6149_4px,#8f8260_7px,#4d422e_10px,#000_11px,#d8cfc2_12px,#fff)]">
                        <button aria-label="Scroll left" class="flex w-4 items-center justify-center border border-black bg-[linear-gradient(135deg,#b0a488,#5a4d37)]"><svg class="h-[9px] w-3" viewBox="0 0 12 9"><path fill="#d8c8a8" stroke="#eee" stroke-width=".5" d="M2 4.500L10 1v7z"/></svg></button>
                        <div class="flex flex-1 justify-center"><div class="my-px w-[15px] border border-black bg-[linear-gradient(#fff,#c8beb0)]"></div></div>
                        <button aria-label="Scroll right" class="flex w-4 items-center justify-center border border-black bg-[linear-gradient(135deg,#b0a488,#5a4d37)]"><svg class="h-[9px] w-3" viewBox="0 0 12 9"><path fill="#d8c8a8" stroke="#eee" stroke-width=".5" d="M10 4.500L2 1v7z"/></svg></button>
                    </div>
                    <div class="border border-black bg-[#cdc4bc]"></div>
                </div>

                <!-- Convoys -->
                <aside class="ml-4 mr-2 mt-[2px] flex w-[90px] shrink-0 flex-col">
                    <div class="h-24 bg-[#2f8ab3]">
                        <fieldset class="h-24 border-2 border-[#d5dce0] border-b-white pl-[7px] text-[13px] leading-[18px] text-white">
                            <legend class="-ml-[2px] h-4 leading-4">Convoys</legend>
                            <label class="flex items-center gap-[6px]"><input type="radio" name="convoys">Mine</label>
                            <label class="flex items-center gap-[6px]"><input type="radio" name="convoys">Axis</label>
                            <label class="flex items-center gap-[6px]"><input type="radio" name="convoys" checked>Allied</label>
                            <label class="flex items-center gap-[6px]"><input type="radio" name="convoys">1 Route</label>
                        </fieldset>
                    </div>
                    <label class="mt-[3px] flex h-[51px] items-center gap-[6px] bg-[#2f8ab3] text-[13px] leading-4 text-white">
                        <span class="relative flex size-[13px] shrink-0">
                            <input type="checkbox" checked class="peer size-[13px] appearance-none border border-[#666] border-b-[#ddd] border-r-[#ddd] bg-white">
                            <svg class="pointer-events-none absolute inset-0 hidden size-[13px] peer-checked:block" viewBox="0 0 13 13"><path fill="none" stroke="#000" stroke-width="2" d="M3 6l2.500 2.500L10 3.500"/></svg>
                        </span>
                        <span>Show<br>Unused<br>Convoys</span>
                    </label>
                    <button class="mb-[14px] mt-auto h-[30px] border border-black bg-[linear-gradient(#f2eee6,#cfc6ba_45%,#8f8677)] font-[Roboto,'Liberation_Sans',sans-serif] text-[11px] shadow-[inset_1px_1px_#fff8]">Coastal Hexes</button>
                </aside>
            </section>

            <!-- Bottom buttons -->
            <footer class="flex h-[31px] shrink-0 items-start pl-[228px] pr-2 font-[Roboto,'Liberation_Sans',sans-serif] text-[11px]">
                <button class="flex h-[30px] w-[130px] items-center justify-center gap-1 border border-black bg-[linear-gradient(#f2eee6,#cfc6ba_45%,#8f8677)] shadow-[inset_1px_1px_#fff8]">
                    <svg class="size-4" viewBox="0 0 16 16"><path fill="#888" stroke="#000" d="M6.500.500h8v13h-8z"/><path fill="#bbb" stroke="#333" d="M10.500 2.500l4-2v13l-4 2z"/><path fill="#f00" stroke="#600" stroke-width=".5" d="M1 4l2-1 2 1 3 2-1 2H4L1 6z"/><path stroke="#000" stroke-dasharray="1 1" d="M0 12.500h6M1 13.500h9M0 14.500h16M1 15.500h15"/></svg>
                    <span><u>C</u>lose</span>
                </button>
                <button class="ml-8 h-[30px] w-[110px] border border-black bg-[linear-gradient(#f2eee6,#cfc6ba_45%,#8f8677)] shadow-[inset_1px_1px_#fff8]">Switch Map</button>
                <label class="ml-[6px] mt-[7px] flex h-[17px] items-center gap-[6px] whitespace-nowrap bg-[#2f8ab3] font-['DejaVu_Sans',Verdana,sans-serif] text-[13px] text-white">
                    <input type="checkbox" class="size-[13px] appearance-none border border-[#666] border-b-[#ddd] border-r-[#ddd] bg-white checked:bg-black">Center linked map
                </label>
                <div class="ml-auto flex gap-[10px]">
                    <button class="h-[30px] w-[110px] border border-black bg-[linear-gradient(#f2eee6,#cfc6ba_45%,#8f8677)] shadow-[inset_1px_1px_#fff8]">Trade Agreements</button>
                    <button class="flex h-[30px] w-[110px] items-center justify-center gap-1 border border-black bg-[linear-gradient(#f2eee6,#cfc6ba_45%,#8f8677)] shadow-[inset_1px_1px_#fff8]"><svg class="size-4"><use href="#book"/></svg><span>Form <u>H</u>elp</span></button>
                    <button class="flex h-[30px] w-[110px] items-center justify-center gap-1 border border-black bg-[linear-gradient(#f2eee6,#cfc6ba_45%,#8f8677)] shadow-[inset_1px_1px_#fff8]"><svg class="size-4"><use href="#book"/></svg><span><u>M</u>ap Help</span></button>
                </div>
            </footer>

            <!-- Bottom frame -->
            <div class="flex h-[17px] shrink-0 items-center justify-between bg-[linear-gradient(#000_1px,#d8cfc8_1px,#b8aea2_4px,#000_4px,#000_5px,#8f8260_6px,#6e6149_9px,#3d3424_11px,#000_11px,#d8cfc8_12px,#b8aea2_15px,#000_15px)]">
                <svg class="h-[7px] w-24" viewBox="0 0 96 7"><path fill="#fff" d="M0 0h24v7H0z"/><path stroke="#000" stroke-width="5" d="M9 8L17-1M17 8L25-1"/><path stroke="#c9c0b4" stroke-width="4" d="M12 8L20-1M31 8L39-1M82 8L90-1"/></svg>
                <svg class="h-[7px] w-12" viewBox="0 0 48 7"><path stroke="#c9c0b4" stroke-width="4" d="M7-1L15 8M27-1L35 8"/></svg>
            </div>
        </div>

        <!-- Right frame -->
        <div class="relative w-6 shrink-0 bg-[linear-gradient(270deg,#5d5138_0,#a1946f_2px,#8a7c5c_4px,#4b412d_5px,#c8c0b0_6px,#3f7fae_7px,#cfe6f5_8px,#e8f4fc_9px,#4d8cb8_10px,#111_11px,#a69a78_12px,#8f8260_13px,#000_13px,#000_14px,#a1946f_15px,#77694b_16px,#000_16px,#000_18px,#cdc4b8_18px,#b8aea2_23px,#000_23px)]">
            <svg class="absolute right-0 top-0 h-6 w-6 -scale-x-100" viewBox="0 0 24 24"><path fill="#b9ab8e" d="M0 0h24v14H0z"/><path fill="#4d422e" d="M0 14h14l10 3v2H0z"/><path fill="#333" stroke="#000" d="M5 3h14v11H5z"/><path fill="#777" d="M7 5h10v3H7z"/></svg>
            <svg class="absolute bottom-0 right-0 h-[92px] w-6 -scale-x-100" viewBox="0 0 24 92"><path fill="#3d3424" d="M14 36l5 8v32h-6V42z"/><path stroke="#c9c0b0" stroke-width="3" d="M12 45l7-8"/><path fill="#6e6149" d="M0 74h20v18H0z"/></svg>
            <svg class="absolute bottom-1 right-0 size-4"><use href="#screw"/></svg>
        </div>
    </div>

    <script>
        // Break every coastline into the 2px steps of the hex map
        const step = 6;
        const snap = v => Math.round(v / step) * step;
        document.querySelectorAll('polygon').forEach(shape => {
            const pts = shape.getAttribute('points').trim().split(' ').map(p => p.split(',').map(Number));
            const out = [];
            pts.forEach(([x, y], i) => {
                const [nx, ny] = pts[(i + 1) % pts.length];
                const n = Math.max(1, Math.ceil(Math.max(Math.abs(nx - x), Math.abs(ny - y)) / step));
                for (let k = 0; k < n; k++) {
                    const px = snap(x + (nx - x) * k / n);
                    const py = snap(y + (ny - y) * k / n);
                    if (out.length) out.push(px + ',' + out[out.length - 1].split(',')[1]);
                    out.push(px + ',' + py);
                }
            });
            shape.setAttribute('points', out.join(' '));
        });
    </script>
</body>
</html>
